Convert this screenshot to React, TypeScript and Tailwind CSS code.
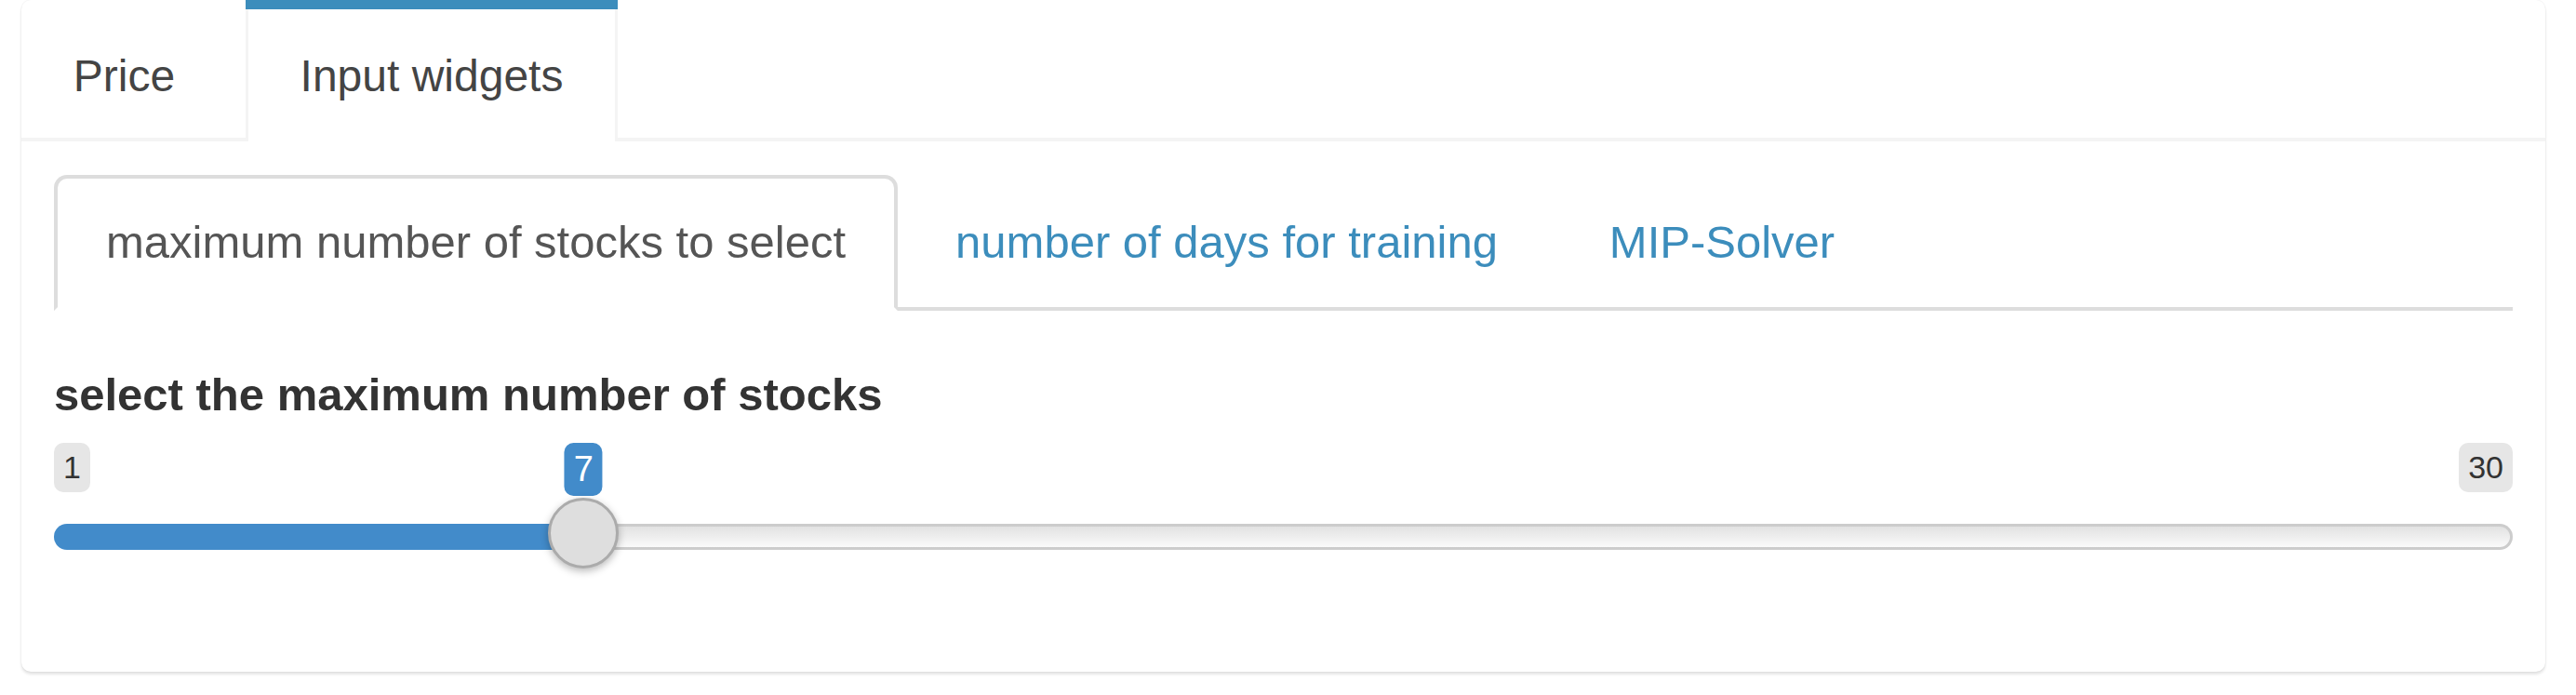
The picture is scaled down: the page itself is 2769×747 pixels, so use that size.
import React from "react";

const outerTabs = [
  { label: "Price", width: "w-[221px] mr-[20px]", active: false },
  { label: "Input widgets", width: "w-[400px]", active: true },
];

const innerTabs = [
  { label: "maximum number of stocks to select", width: "w-[907px]", active: true },
  { label: "number of days for training", width: "w-[693px]", active: false },
  { label: "MIP-Solver", width: "w-[358px]", active: false },
];

function StockSlider() {
  // value 7 on a 1..30 range, handle 76px wide on a 2644px line
  const min = 1;
  const max = 30;
  const value = 7;
  const lineWidth = 2644;
  const handle = 76;
  const center = handle / 2 + ((value - min) / (max - min)) * (lineWidth - handle);

  return (
    <div className="flex h-[137px] w-full flex-col">
      <div className="relative flex h-[57px] items-start justify-between text-[34px] leading-[47px] text-[#333]">
        <span className="rounded-[10px] bg-[#e6e6e6] px-[10px] py-[3px]">{min}</span>
        <span
          className="absolute top-0 -translate-x-1/2 rounded-[10px] bg-[#428bca] px-[10px] py-[3px] text-[38px] leading-[51px] text-white"
          style={{ left: center }}
        >
          {value}
        </span>
        <span className="rounded-[10px] bg-[#e6e6e6] px-[10px] py-[3px]">{max}</span>
      </div>
      <div className="relative mt-[30px] flex h-[28px]">
        <div className="h-full shrink-0 rounded-l-full bg-[#428bca]" style={{ width: center }} />
        <div className="h-full flex-1 rounded-r-full border-[3.5px] border-l-0 border-[#cccccc] bg-gradient-to-b from-[#e2e2e2] to-[#fafafa]" />
        <div
          className="absolute -top-[28px] h-[76px] w-[76px] -translate-x-1/2 rounded-full border-[3.5px] border-[#ababab] bg-[#dedede] shadow-[0_3px_8px_rgba(0,0,0,0.28)]"
          style={{ left: center }}
        />
      </div>
    </div>
  );
}

export default function App() {
  return (
    <div className="min-h-screen bg-white pl-[23px] pr-[33px] font-['Liberation_Sans',Arial,sans-serif]">
      <div className="rounded-[10px] bg-white shadow-[0_0_2px_rgba(0,0,0,0.1),0_3px_3px_rgba(0,0,0,0.1)]">
        <ul className="flex h-[152px] border-b-4 border-[#f4f4f4]">
          {outerTabs.map((t) => (
            <li
              key={t.label}
              className={`-mb-[4px] h-[152px] shrink-0 border-t-[10px] ${t.width} ${
                t.active ? "border-t-[#3c8dbc] bg-white" : "border-t-transparent"
              }`}
            >
              <a
                className={`block h-[142px] border-x-[3px] pt-[38px] text-center text-[48px] leading-[68px] text-[#444] ${
                  t.active ? "border-x-[#f4f4f4]" : "border-x-transparent"
                }`}
              >
                {t.label}
              </a>
            </li>
          ))}
        </ul>

        <div className="px-[35px] pt-[36px] pb-[109px]">
          <ul className="flex h-[146px] border-b-4 border-[#dddddd]">
            {innerTabs.map((t) => (
              <li key={t.label} className={`-mb-[4px] mr-[7px] shrink-0 ${t.width}`}>
                <a
                  className={`block h-[146px] rounded-t-[14px] border-4 pt-[34px] text-center text-[49px] leading-[68px] ${
                    t.active
                      ? "border-[#dddddd] border-b-white bg-white text-[#555]"
                      : "border-transparent text-[#3c8dbc]"
                  }`}
                >
                  {t.label}
                </a>
              </li>
            ))}
          </ul>

          <div className="mt-[56px] flex flex-col gap-[18px]">
            <label className="block text-[49px] font-bold leading-[68px] text-[#333]">
              select the maximum number of stocks
            </label>
            <StockSlider />
          </div>
        </div>
      </div>
    </div>
  );
}
